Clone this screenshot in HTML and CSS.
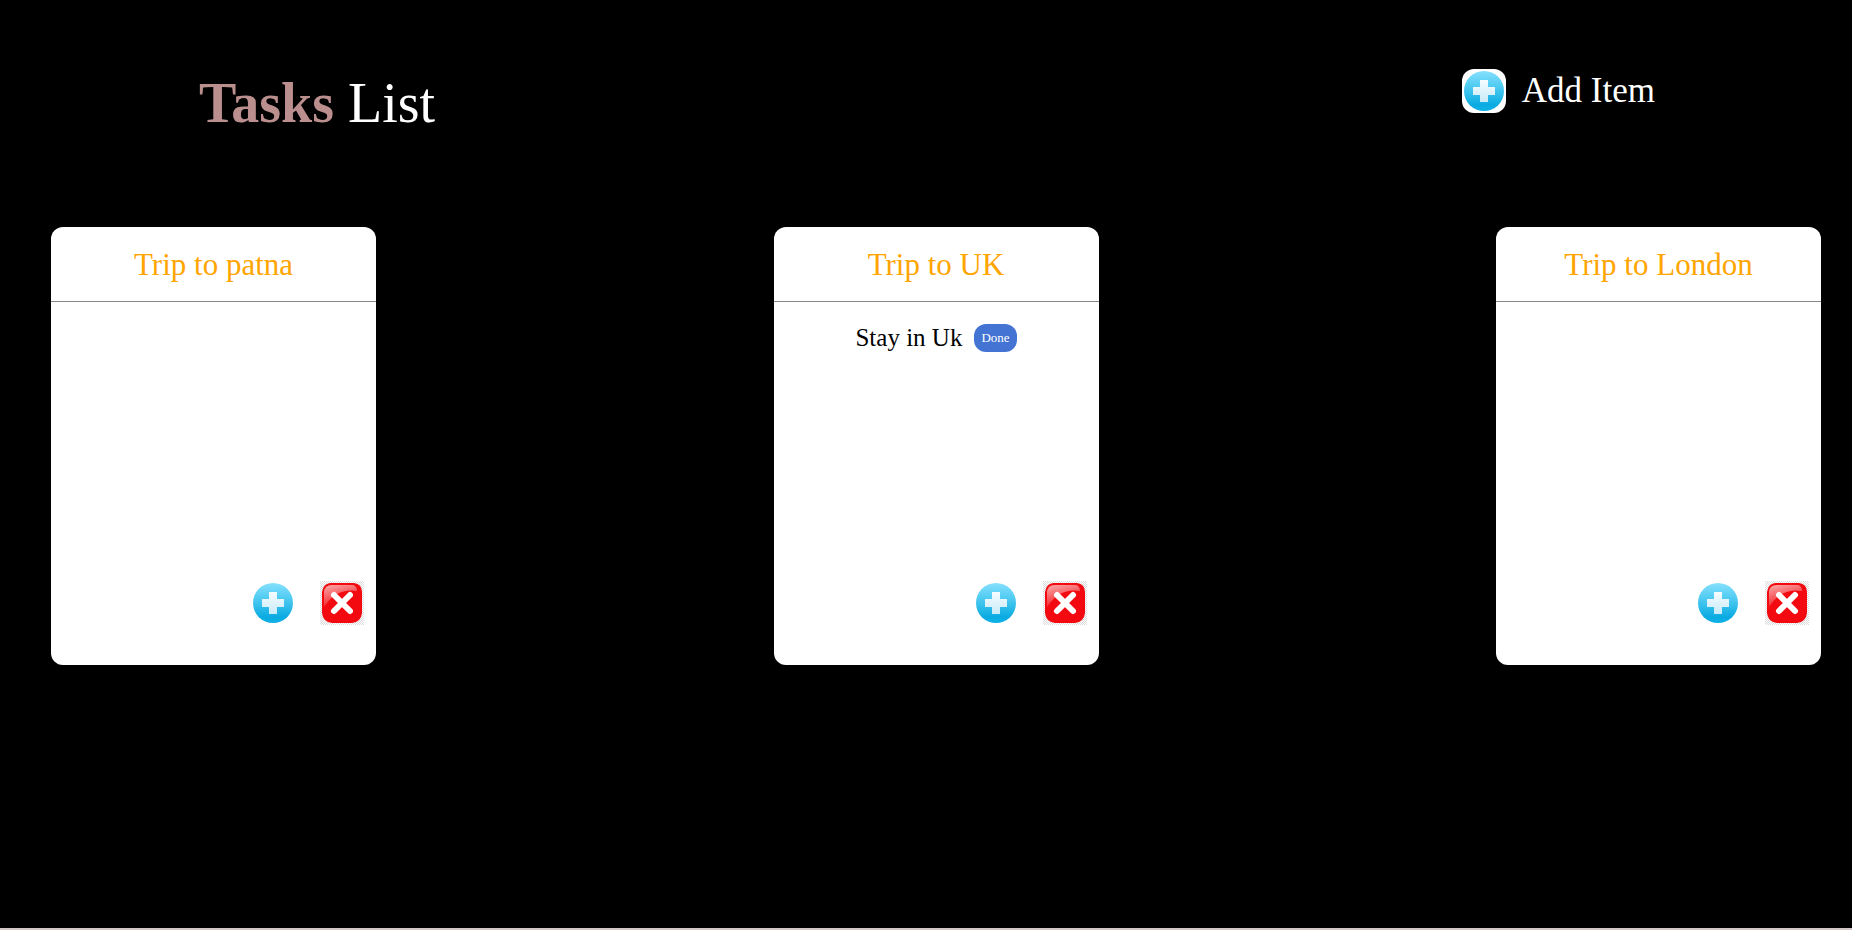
FILE: index.html
```html
<!DOCTYPE html>
<html lang="en">
<head>
<meta charset="utf-8">
<meta name="viewport" content="width=device-width, initial-scale=1">
<title>Tasks List</title>
<link rel="stylesheet" href="styles.css">
</head>
<body>
<svg class="defs" aria-hidden="true">
  <defs>
    <linearGradient id="sky" x1="0" y1="0" x2="0" y2="1">
      <stop offset="0" stop-color="#86e0fd"/>
      <stop offset="0.5" stop-color="#3fc4ee"/>
      <stop offset="0.85" stop-color="#0aabe2"/>
      <stop offset="1" stop-color="#12b2e6"/>
    </linearGradient>
    <linearGradient id="frost" x1="0" y1="0" x2="0" y2="1">
      <stop offset="0" stop-color="#f6fcff"/>
      <stop offset="1" stop-color="#c9ebf9"/>
    </linearGradient>
    <linearGradient id="gloss" x1="0.1" y1="0" x2="0.5" y2="1">
      <stop offset="0" stop-color="#fba5a5"/>
      <stop offset="0.5" stop-color="#f65c60"/>
      <stop offset="1" stop-color="#f2161c"/>
    </linearGradient>
    <pattern id="checks" width="2" height="2" patternUnits="userSpaceOnUse">
      <path d="M0 0h1v1h-1zM1 1h1v1h-1z" fill="#dcdcdc"/>
    </pattern>
    <symbol id="plus" viewBox="0 0 44 44">
      <circle cx="22" cy="22" r="20" fill="url(#sky)"/>
      <path d="M18 11h8v7h7v8h-7v7h-8v-7h-7v-8h7z" fill="url(#frost)"/>
    </symbol>
    <symbol id="cross" viewBox="0 0 44 44">
      <path d="M0 0h44v44h-44z" fill="url(#checks)"/>
      <path d="M10 2H34Q42 3 42 11V32Q41 41 32 42H12Q3 41 2 32V11Q3 3 10 2z" fill="#f20a10"/>
      <path d="M4 26V12Q4 4 12 4H33Q37 5 37 10Q26 8 17 13Q10 17 4 26z" fill="url(#gloss)"/>
      <path d="M14 14L30 30M30 14L14 30" stroke="#fff" stroke-width="6" stroke-linecap="round"/>
    </symbol>
  </defs>
</svg>
<div class="page">
  <header class="header">
    <h1 class="title"><strong class="accent">Tasks</strong> List</h1>
    <button class="add-item" type="button">
      <svg class="icon tile" aria-hidden="true"><use href="#plus"/></svg>
      Add Item
    </button>
  </header>
  <main class="board">
    <section class="card">
      <h2 class="card-title">Trip to patna</h2>
      <ul class="tasks"></ul>
      <div class="actions">
        <button class="icon-button" type="button" aria-label="Add task"><svg class="icon" aria-hidden="true"><use href="#plus"/></svg></button>
        <button class="icon-button" type="button" aria-label="Delete list"><svg class="icon" aria-hidden="true"><use href="#cross"/></svg></button>
      </div>
    </section>
    <section class="card">
      <h2 class="card-title">Trip to UK</h2>
      <ul class="tasks">
        <li class="task">Stay in Uk <button class="done" type="button">Done</button></li>
      </ul>
      <div class="actions">
        <button class="icon-button" type="button" aria-label="Add task"><svg class="icon" aria-hidden="true"><use href="#plus"/></svg></button>
        <button class="icon-button" type="button" aria-label="Delete list"><svg class="icon" aria-hidden="true"><use href="#cross"/></svg></button>
      </div>
    </section>
    <section class="card">
      <h2 class="card-title">Trip to London</h2>
      <ul class="tasks"></ul>
      <div class="actions">
        <button class="icon-button" type="button" aria-label="Add task"><svg class="icon" aria-hidden="true"><use href="#plus"/></svg></button>
        <button class="icon-button" type="button" aria-label="Delete list"><svg class="icon" aria-hidden="true"><use href="#cross"/></svg></button>
      </div>
    </section>
  </main>
</div>
</body>
</html>
```
FILE: styles.css
```css
* {
  box-sizing: border-box;
}

body {
  margin: 0;
  background: #000;
  color: #fff;
  font-family: "Liberation Serif", "Times New Roman", serif;
}

button {
  padding: 0;
  border: 0;
  background: none;
  color: inherit;
  font-family: inherit;
  cursor: pointer;
}

.defs {
  position: absolute;
  width: 0;
  height: 0;
}

.page {
  min-height: 100vh;
  border-bottom: 2px solid #d3c7c7;
}

.header {
  display: flex;
  justify-content: space-between;
  align-items: flex-start;
  padding: 69px 197px 0 199px;
}

.title {
  margin: 0;
  font-size: 56px;
  font-weight: 400;
  line-height: 68px;
}

.accent {
  color: rosybrown;
}

.add-item {
  display: flex;
  align-items: center;
  gap: 16px;
  font-size: 35px;
  line-height: 40px;
}

.icon {
  display: block;
  width: 44px;
  height: 44px;
}

.tile {
  border-radius: 12px;
  background: #fff;
}

.board {
  display: flex;
  justify-content: space-between;
  padding: 90px 31px 0 51px;
}

.card {
  display: flex;
  flex-direction: column;
  width: 325px;
  min-height: 438px;
  padding-bottom: 40px;
  border-radius: 12px;
  background: #fff;
  color: #000;
}

.card-title {
  margin: 0;
  padding: 20px 0 18px;
  border-bottom: 1px solid #888;
  color: orange;
  font-size: 31px;
  font-weight: 400;
  line-height: 36px;
  text-align: center;
}

.tasks {
  flex: 1;
  margin: 0;
  padding: 22px 0;
  list-style: none;
}

.task {
  display: flex;
  justify-content: center;
  align-items: center;
  gap: 12px;
  font-size: 25px;
  line-height: 28px;
}

.done {
  padding: 0 7px;
  border-radius: 12px;
  background: #4373d3;
  color: #fff;
  font-size: 13px;
  line-height: 28px;
}

.actions {
  display: flex;
  justify-content: flex-end;
  gap: 25px;
  padding-right: 12px;
}
```
